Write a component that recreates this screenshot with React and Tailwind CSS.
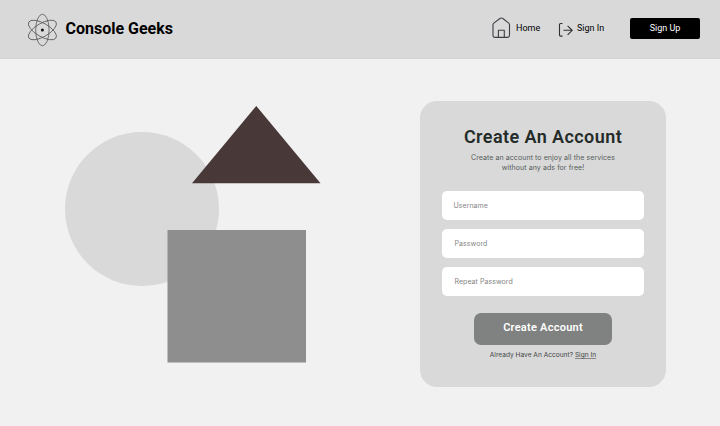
function AtomLogo() {
  return (
    <svg className="mt-[2px] h-[34px] w-[32px] shrink-0" viewBox="0 0 32 34" fill="none" stroke="#505050" strokeWidth="0.75">
      <ellipse cx="16.4" cy="17" rx="6.7" ry="15.8" />
      <ellipse cx="16.4" cy="17" rx="6.7" ry="15.8" transform="rotate(60 16.4 17)" />
      <ellipse cx="16.4" cy="17" rx="6.7" ry="15.8" transform="rotate(120 16.4 17)" />
      <circle cx="16.4" cy="17" r="1.5" fill="#111" stroke="none" />
    </svg>
  );
}

function HomeIcon() {
  return (
    <svg className="mb-[3px] h-[22px] w-[20px] shrink-0" viewBox="0 0 20 22" fill="none" stroke="#3e3f45" strokeWidth="1.1" strokeLinejoin="round">
      <path d="M1 7.8 Q1 6.8 1.8 6.1 L7.6 1.7 Q9.4 .4 11.2 1.7 L16.7 6.1 Q17.5 6.8 17.5 7.8 V18.2 Q17.5 20.4 15.3 20.4 H3.2 Q1 20.4 1 18.2 Z" />
      <path d="M6.4 20.4 V13.2 H12.3 V20.4" />
    </svg>
  );
}

function SignInIcon() {
  return (
    <svg className="mt-px h-[16px] w-[16px] shrink-0" viewBox="0 0 16 16" fill="none" stroke="#303030" strokeWidth="1.1">
      <path d="M4.5 1.5 H2.5 Q1.5 1.5 1.5 2.5 V13.1 Q1.5 14.1 2.5 14.1 H4.5" />
      <path d="M5.5 8.3 H14 M9.6 3.8 L14.2 8.3 L9.6 12.8" />
    </svg>
  );
}

function Field({ label, className }) {
  return (
    <div className={`flex h-[29px] w-[202px] items-center rounded-[5px] bg-white text-[7px] leading-none tracking-[0.05px] text-[#858585] ${className}`}>
      <span>{label}</span>
    </div>
  );
}

export default function App() {
  return (
    <div className="h-[426px] w-[720px] overflow-hidden bg-[#f1f1f1] font-['Roboto',sans-serif]">
      <header className="flex h-[59px] items-center border-b border-[#d3d3d3] bg-[#d9d9d9] pr-5 pl-[26px]">
        <AtomLogo />
        <span className="ml-[7.5px] text-[16px] font-bold whitespace-nowrap text-black">Console Geeks</span>
        <nav className="ml-auto flex items-center text-[9px] whitespace-nowrap text-black">
          <a className="flex items-center">
            <HomeIcon />
            <span className="ml-1 w-[42px]">Home</span>
          </a>
          <a className="flex items-center">
            <SignInIcon />
            <span className="ml-[3px] w-[53px]">Sign In</span>
          </a>
          <button className="mb-px h-[20.5px] w-[70px] rounded-[2px] bg-black text-[9px] text-white">Sign Up</button>
        </nav>
      </header>
      <main className="flex items-start">
        <svg className="h-[367px] w-[420px] shrink-0" viewBox="0 59 420 367">
          <circle cx="142" cy="209" r="77" fill="#d9d9d9" />
          <path d="M256.3 106 L320.5 183.3 H192 Z" fill="#483838" />
          <rect x="167.5" y="230" width="138.5" height="132.5" fill="#8e8e8e" />
        </svg>
        <section className="mt-[42px] flex h-[286px] w-[246px] flex-col items-center rounded-[17px] bg-[#d9d9d9] pt-6 font-['Inter',sans-serif]">
          <h1 className="font-['Roboto',sans-serif] text-[18px] leading-6 font-semibold tracking-[0.42px] whitespace-nowrap text-[#242b29]">Create An Account</h1>
          <p className="mt-1 text-center text-[7px] leading-[10px] tracking-[0.08px] whitespace-nowrap text-[#555b59]">
            Create an account to enjoy all the services
            <br />
            without any ads for free!
          </p>
          <form className="mt-[18px] mr-[1px] flex flex-col gap-[9px]">
            <Field label="Username" className="pl-3" />
            <Field label="Password" className="pl-[13px]" />
            <Field label="Repeat Password" className="pl-[13px]" />
          </form>
          <button className="mt-[16.5px] h-8 w-[138px] rounded-[7px] bg-[#808281] font-['Roboto',sans-serif] text-[11px] font-semibold tracking-[0.25px] whitespace-nowrap text-white">
            Create Account
          </button>
          <p className="mt-[5.5px] text-[6.6px] leading-[10px] whitespace-nowrap text-[#424645]">
            Already Have An Account? <a className="underline decoration-[#888] decoration-[0.5px] underline-offset-1">Sign In</a>
          </p>
        </section>
      </main>
    </div>
  );
}
